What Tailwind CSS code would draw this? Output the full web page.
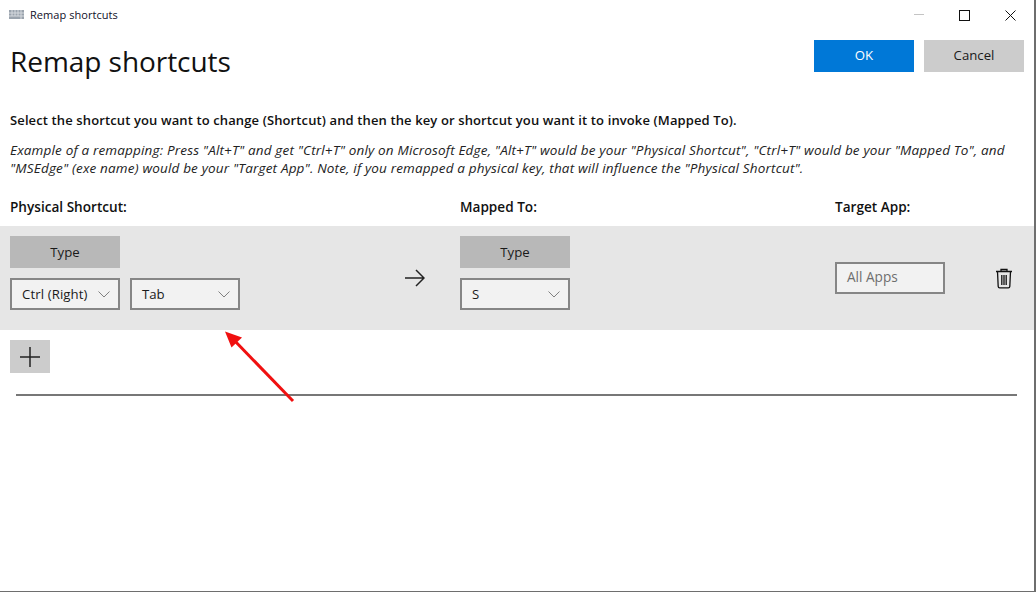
<!DOCTYPE html>
<html>
  <head>
    <title>Remap shortcuts</title>
    <meta charset="UTF-8" />
    <script src="https://cdn.jsdelivr.net/npm/@tailwindcss/browser@4"></script>
  </head>

  <body class="bg-white">
    <div class="relative w-[1036px] h-[592px] overflow-hidden bg-white text-[#1a1a1a] font-['Open_Sans','Noto_Sans',sans-serif]">

      <!-- title bar -->
      <header class="flex items-center justify-between h-[30px] pl-[9px]">
        <div class="flex items-center">
          <svg width="15" height="9" viewBox="0 0 15 9" class="mt-[-2px]">
            <rect width="15" height="9" fill="#9aa3ad" />
            <path d="M0 3h15M0 6h15M3 0v6M6 0v6M9 0v6M12 0v9" stroke="#d5d9de" stroke-width="1" />
          </svg>
          <span class="ml-[6px] text-[11px] tracking-[0.05px] text-[#101028]">Remap shortcuts</span>
        </div>
        <div class="flex items-center pr-[20px]">
          <svg width="10" height="10" viewBox="0 0 10 10" class="mr-[35px]"><path d="M0 4.5h10" stroke="#c4c4c4" /></svg>
          <svg width="11" height="11" viewBox="0 0 11 11" class="mr-[35px]"><rect x="0.5" y="0.5" width="10" height="10" fill="none" stroke="#111" /></svg>
          <svg width="11" height="11" viewBox="0 0 11 11"><path d="M0.5 0.5l10 10M10.5 0.5l-10 10" stroke="#111" /></svg>
        </div>
      </header>

      <!-- heading -->
      <div class="flex justify-between items-start pl-[10px] pr-[12px] pt-[10px]">
        <h1 class="text-[28px] leading-[44px] mt-[-1px] text-[#111] tracking-[-0.05px]">Remap shortcuts</h1>
        <div class="flex gap-[10px]">
          <button class="w-[100px] h-[32px] bg-[#0078d7] text-white text-[13.2px]">OK</button>
          <button class="w-[100px] h-[32px] bg-[#cccccc] text-[13.2px]">Cancel</button>
        </div>
      </div>

      <p class="mt-[28px] pl-[10px] h-[18px] text-[13px] leading-[18px] font-semibold text-[#111] tracking-[0.12px] whitespace-nowrap">Select the shortcut you want to change (Shortcut) and then the key or shortcut you want it to invoke (Mapped To).</p>
      <p class="mt-[12px] pl-[10px] text-[13.5px] leading-[18px] italic text-[#222] tracking-[0.17px] whitespace-nowrap">Example of a remapping: Press "Alt+T" and get "Ctrl+T" only on Microsoft Edge, "Alt+T" would be your "Physical Shortcut", "Ctrl+T" would be your "Mapped To", and<br>"MSEdge" (exe name) would be your "Target App". Note, if you remapped a physical key, that will influence the "Physical Shortcut".</p>

      <!-- column labels -->
      <div class="flex mt-[21px] pl-[10px] h-[18px] text-[13.6px] leading-[18px] font-semibold text-[#111]">
        <span class="w-[450px]">Physical Shortcut:</span>
        <span class="w-[375px]">Mapped To:</span>
        <span>Target App:</span>
      </div>

      <!-- remap row -->
      <div class="flex mt-[10px] w-[1034px] h-[104px] pl-[10px] pt-[10px] bg-[#e6e6e6]">
        <div class="w-[380px]">
          <button class="block w-[110px] h-[32px] pt-[1px] bg-[#b8b8b8] text-[13.2px]">Type</button>
          <div class="flex gap-[10px] mt-[10px]">
            <div class="flex items-center justify-between w-[110px] h-[32px] pl-[10px] pr-[8px] pt-[1px] border-2 border-[#868686] bg-[#f2f2f2] text-[13.2px]">
              <span class="whitespace-nowrap tracking-[0.1px]">Ctrl (Right)</span>
              <svg width="12" height="7" viewBox="0 0 12 7" class="shrink-0"><path d="M0.5 0.5l5.5 5.5l5.5-5.5" fill="none" stroke="#808080" /></svg>
            </div>
            <div class="flex items-center justify-between w-[110px] h-[32px] pl-[10px] pr-[8px] pt-[1px] border-2 border-[#868686] bg-[#f2f2f2] text-[13.2px]">
              <span>Tab</span>
              <svg width="12" height="7" viewBox="0 0 12 7" class="shrink-0"><path d="M0.5 0.5l5.5 5.5l5.5-5.5" fill="none" stroke="#808080" /></svg>
            </div>
          </div>
        </div>

        <div class="w-[70px] pt-[32px] pl-[15px]">
          <svg width="20" height="20" viewBox="0 0 20 20"><path d="M0 10h19M11 2l8 8l-8 8" fill="none" stroke="#222" stroke-width="1.5" /></svg>
        </div>

        <div class="w-[375px]">
          <button class="block w-[110px] h-[32px] pt-[1px] bg-[#b8b8b8] text-[13.2px]">Type</button>
          <div class="flex items-center justify-between w-[110px] h-[32px] mt-[10px] pl-[10px] pr-[8px] pt-[1px] border-2 border-[#868686] bg-[#f2f2f2] text-[13.2px]">
            <span>S</span>
            <svg width="12" height="7" viewBox="0 0 12 7" class="shrink-0"><path d="M0.5 0.5l5.5 5.5l5.5-5.5" fill="none" stroke="#808080" /></svg>
          </div>
        </div>

        <div class="flex items-start pt-[26px]">
          <div class="flex items-center w-[110px] h-[32px] pl-[10px] pb-[2px] border-2 border-[#868686] bg-[#f2f2f2] text-[13.6px] text-[#6e6e6e]">All Apps</div>
          <svg width="18" height="21" viewBox="0 0 18 21" class="ml-[50px] mt-[6px]">
            <path d="M1 3.5h16M6 3.5V1.5h6v2M2.5 3.5l0.7 15a1.5 1.5 0 0 0 1.5 1.4h8.6a1.5 1.5 0 0 0 1.5-1.4l0.7-15M6.8 7v10M9 7v10M11.2 7v10" fill="none" stroke="#111" stroke-width="1.3" />
          </svg>
        </div>
      </div>

      <!-- add row -->
      <button class="flex items-center justify-center w-[40px] h-[33px] ml-[10px] mt-[10px] bg-[#cccccc]">
        <svg width="20" height="20" viewBox="0 0 20 20"><path d="M10 0v20M0 10h20" stroke="#222" stroke-width="1.5" /></svg>
      </button>

      <div class="ml-[16px] mt-[21px] w-[1001px] h-[2px] bg-[#777]"></div>

      <!-- red annotation arrow over the page -->
      <svg class="absolute left-[215px] top-[322px]" width="90" height="90" viewBox="0 0 90 90">
        <path d="M78 79L17 16" stroke="#f01010" stroke-width="3" fill="none" />
        <path d="M10 9.5L27 15.5L16.5 25.5Z" fill="#f01010" />
      </svg>

      <!-- window frame -->
      <div class="absolute right-0 top-0 w-[2px] h-full bg-[#6e6e6e]"></div>
      <div class="absolute left-0 bottom-0 w-full h-[1px] bg-[#6e6e6e]"></div>
    </div>
  </body>
</html>
